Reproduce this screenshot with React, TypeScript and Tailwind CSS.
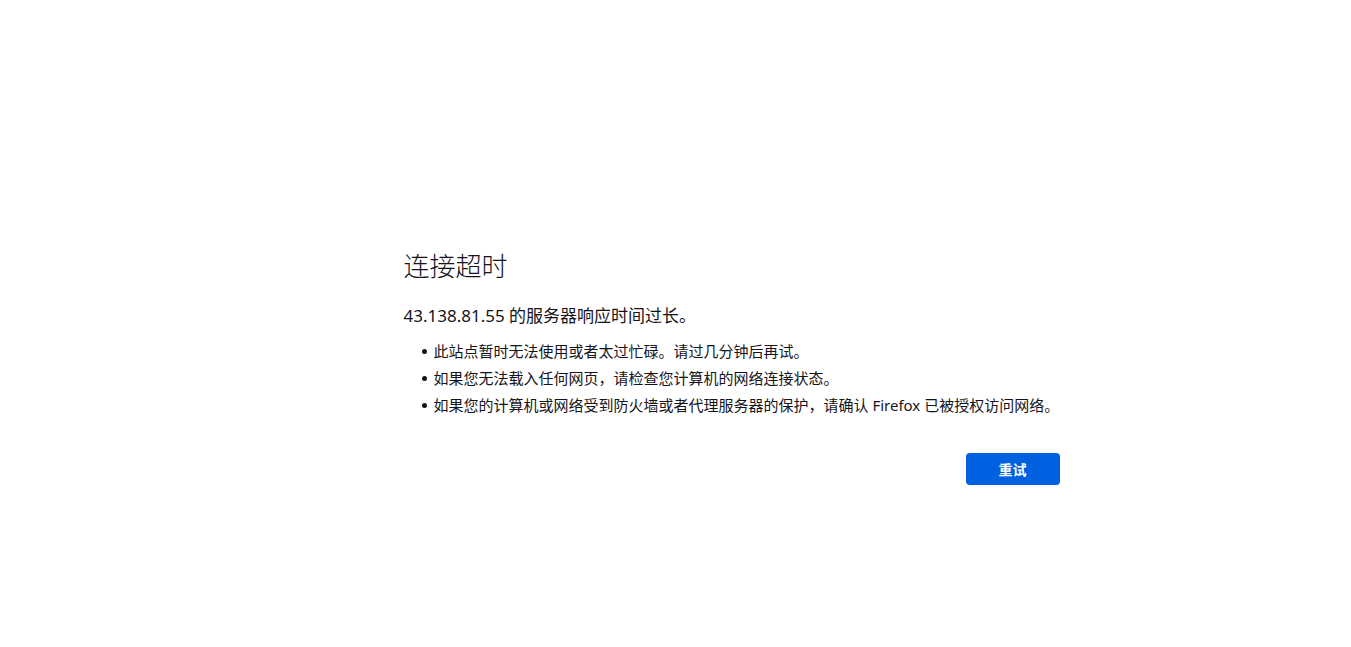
const REASONS = [
  '此站点暂时无法使用或者太过忙碌。请过几分钟后再试。',
  '如果您无法载入任何网页，请检查您计算机的网络连接状态。',
  '如果您的计算机或网络受到防火墙或者代理服务器的保护，请确认 Firefox 已被授权访问网络。',
]

export default function App() {
  return (
    <div
      className="min-h-screen w-full bg-white text-[#15141a]"
      style={{ fontFamily: '"Noto Sans", "Noto Sans CJK SC", sans-serif' }}
    >
      <div className="mx-auto w-[768px] pl-[112px] pt-[251px]">
        <h1 className="text-[26px] font-light leading-[31px]">连接超时</h1>

        <p className="mt-[22px] text-[17px] leading-[24px]">43.138.81.55 的服务器响应时间过长。</p>

        <ul className="mt-[10px] pl-[18px]">
          {REASONS.map((r) => (
            <li key={r} className="flex items-center gap-[7px] text-[15px] leading-[27px]">
              <span className="size-[5px] shrink-0 rounded-full bg-[#15141a]" />
              <span>{r}</span>
            </li>
          ))}
        </ul>

        <div className="mt-[34px] flex justify-end">
          <button
            type="button"
            className="h-[32px] w-[94px] rounded-[4px] bg-[#0061e0] text-[14px] font-bold text-white"
          >
            重试
          </button>
        </div>
      </div>
    </div>
  )
}
